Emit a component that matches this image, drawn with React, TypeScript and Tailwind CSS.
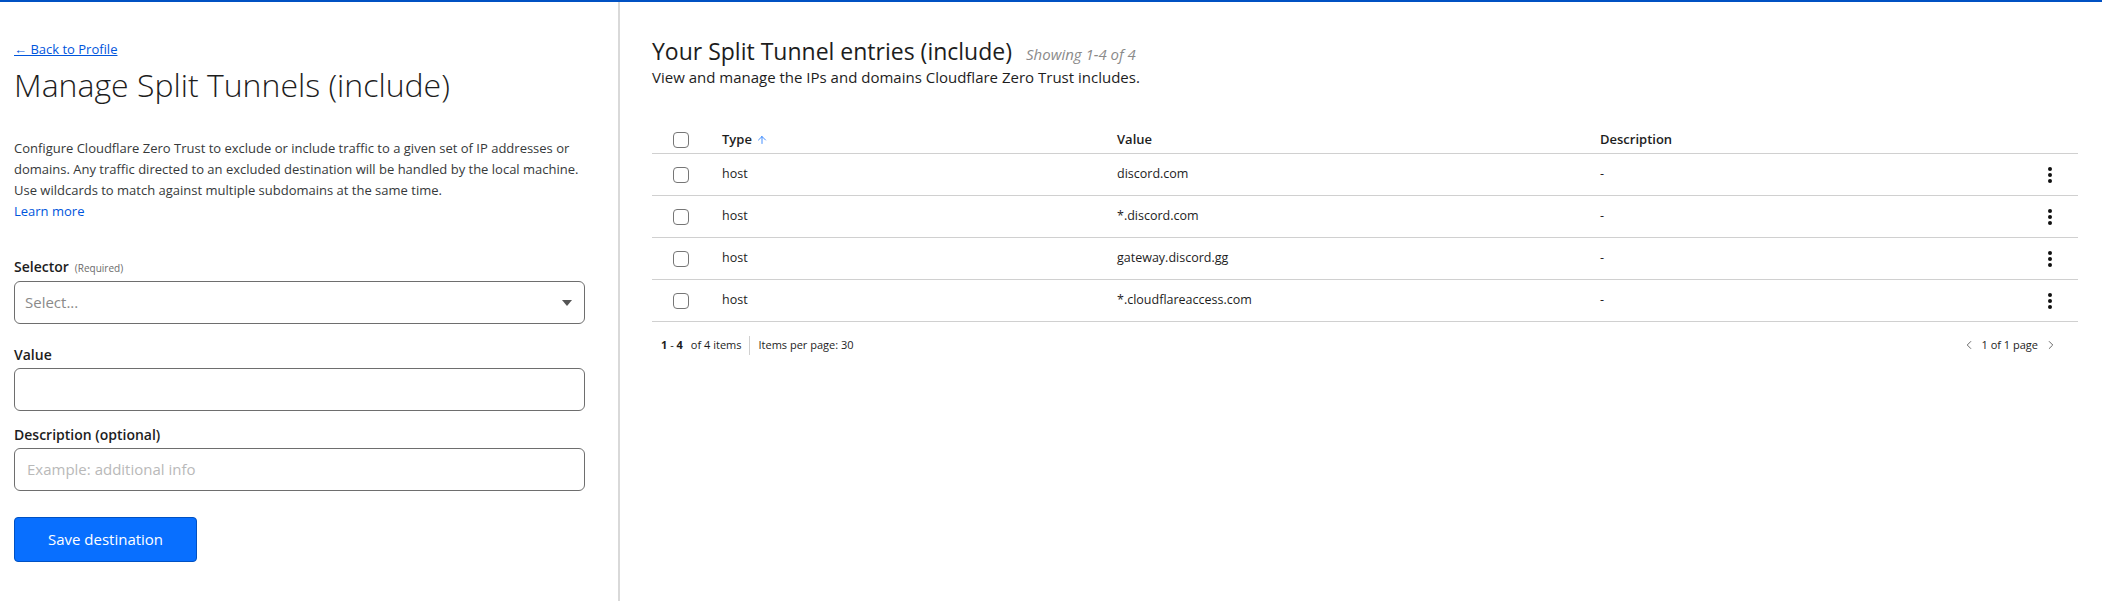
import React from "react";
import { ArrowUp, ChevronLeft, ChevronRight } from "lucide-react";

const rows = [
  { type: "host", value: "discord.com", desc: "-" },
  { type: "host", value: "*.discord.com", desc: "-" },
  { type: "host", value: "gateway.discord.gg", desc: "-" },
  { type: "host", value: "*.cloudflareaccess.com", desc: "-" },
];

function Checkbox() {
  return <span className="block w-[16px] h-[16px] rounded-[4px] border border-[#767676] bg-white" />;
}

function Kebab() {
  return (
    <span className="flex flex-col items-center gap-[2px]">
      <span className="block w-[4px] h-[4px] rounded-full bg-[#111]" />
      <span className="block w-[4px] h-[4px] rounded-full bg-[#111]" />
      <span className="block w-[4px] h-[4px] rounded-full bg-[#111]" />
    </span>
  );
}

export default function App() {
  return (
    <div className="w-[2102px] h-[601px] bg-white border-t-2 border-[#0051c3] flex font-['Open_Sans',sans-serif] text-[#313131] overflow-hidden">
      <aside className="w-[618px] shrink-0 pl-[14px] pr-[33px] pt-[38px]">
        <a className="block text-[13px] leading-[18px] text-[#0055dc] underline w-fit">← Back to Profile</a>
        <h1 className="mt-[7px] text-[32px] leading-[40px] font-light text-[#1d1d1d]">Manage Split Tunnels (include)</h1>
        <p className="mt-[33px] mr-[-10px] text-[13px] leading-[21px] text-[#36393a]">
          Configure Cloudflare Zero Trust to exclude or include traffic to a given set of IP addresses or domains. Any traffic directed to an excluded destination will be handled by the local machine. Use wildcards to match against multiple subdomains at the same time.
          <br />
          <a className="text-[#0055dc]">Learn more</a>
        </p>
        <div className="mt-[34px] flex items-baseline gap-[6px] h-[20px]">
          <span className="text-[14px] font-semibold text-[#1d1d1d]">Selector</span>
          <span className="text-[10px] text-[#6b6b6b]">(Required)</span>
        </div>
        <div className="mt-[5px] h-[43px] rounded-[6px] border border-[#6e6e6e] flex items-center justify-between pl-[10px] pr-[12px]">
          <span className="text-[15px] text-[#8a8a8a]">Select...</span>
          <svg width="10" height="6" viewBox="0 0 10 6"><path d="M0 0 L10 0 L5 6 Z" fill="#555" /></svg>
        </div>
        <div className="mt-[20px] h-[20px] text-[14px] font-semibold text-[#1d1d1d]">Value</div>
        <div className="mt-[4px] h-[43px] rounded-[6px] border border-[#6e6e6e]" />
        <div className="mt-[13px] h-[20px] text-[14px] font-semibold text-[#1d1d1d]">Description (optional)</div>
        <div className="mt-[4px] h-[43px] rounded-[6px] border border-[#6e6e6e] flex items-center pl-[12px]">
          <span className="text-[15px] text-[#b9b9b9]">Example: additional info</span>
        </div>
        <button className="mt-[26px] w-[183px] h-[45px] rounded-[4px] bg-[#086fff] border border-[#0051c3] text-white text-[15px]">Save destination</button>
      </aside>
      <div className="w-[2px] shrink-0 bg-[#d9d9d9]" />
      <main className="flex-1 pl-[32px] pr-[24px] pt-[34px]">
        <div className="flex items-baseline gap-[14px] h-[30px]">
          <h2 className="text-[23px] leading-[30px] text-[#1d1d1d]">Your Split Tunnel entries (include)</h2>
          <span className="text-[15px] italic text-[#8a8a8a]">Showing 1-4 of 4</span>
        </div>
        <p className="text-[15px] leading-[22px] text-[#1d1d1d]">View and manage the IPs and domains Cloudflare Zero Trust includes.</p>
        <div className="mt-[39px]">
          <div className="grid grid-cols-[70px_395px_483px_1fr_56px] h-[27px] items-center border-b border-[#d0d0d0] text-[13px] font-semibold text-[#1d1d1d]">
            <div className="pl-[21px]"><Checkbox /></div>
            <div className="flex items-center gap-[4px]">Type <ArrowUp size={12} strokeWidth={1.5} className="text-[#0a6cff]" /></div>
            <div>Value</div>
            <div>Description</div>
            <div />
          </div>
          {rows.map((r, i) => (
            <div key={i} className="grid grid-cols-[70px_395px_483px_1fr_56px] h-[42px] items-center border-b border-[#d0d0d0] text-[12.5px] text-[#1d1d1d]">
              <div className="pl-[21px]"><Checkbox /></div>
              <div>{r.type}</div>
              <div>{r.value}</div>
              <div>{r.desc}</div>
              <div className="flex justify-center"><Kebab /></div>
            </div>
          ))}
          <div className="h-[46px] flex items-center justify-between pl-[9px] pr-[20px] text-[11px] text-[#1d1d1d]">
            <div className="flex items-center">
              <span><b>1</b> - <b>4</b></span>
              <span className="ml-[8px]">of 4 items</span>
              <span className="mx-[8px] w-px h-[19px] bg-[#d0d0d0]" />
              <span>Items per page: 30</span>
            </div>
            <div className="flex items-center gap-[6px]">
              <ChevronLeft size={14} strokeWidth={1.5} className="text-[#555]" />
              <span>1 of 1 page</span>
              <ChevronRight size={14} strokeWidth={1.5} className="text-[#555]" />
            </div>
          </div>
        </div>
      </main>
    </div>
  );
}
